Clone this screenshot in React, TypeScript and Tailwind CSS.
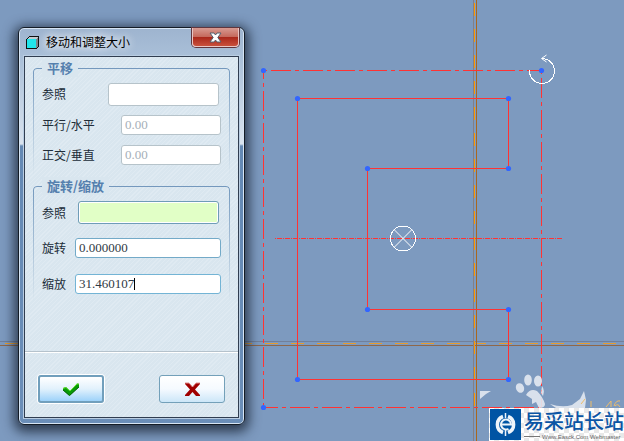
import { useId, type ReactNode } from "react";

const SHAPE: [number, number][] = [
  [297, 98], [508, 98], [508, 168], [367, 168],
  [367, 309], [508, 309], [508, 379], [297, 379],
];
const CORNERS: [number, number][] = [[263, 70], [541, 70], [263, 407]];

function Canvas() {
  return (
    <svg className="absolute inset-0 h-full w-full" shapeRendering="crispEdges" aria-hidden="true">
      <g fill="none" strokeWidth="1">
        <path d="M0 341.5H2000" stroke="#72809a" />
        <path d="M5 343.5H2000" stroke="#e69b2c" strokeDasharray="13 13" />
        <path d="M0 345.5H2000" stroke="#8f6749" />
        <path d="M473.5 0V441" stroke="#837f86" />
        <path d="M474.5 3V408" stroke="#ff9900" strokeDasharray="13 13" />
        <path d="M476.5 0V441" stroke="#a9671f" />
      </g>
      <g fill="none" stroke="#ff3333" strokeWidth="1">
        <path d="M263 70.500H541" strokeDasharray="20 4 4 4" strokeDashoffset="24" />
        <path d="M263.500 70V407" strokeDasharray="20 4 4 4" strokeDashoffset="11" />
        <path d="M541.500 70V407" strokeDasharray="20 4 4 4" strokeDashoffset="24" />
        <path d="M263 407.500H541" strokeDasharray="20 4 4 4" strokeDashoffset="5" />
        <path d="M297.500 98.500H508.500V168.500H367.500V309.500H508.500V379.500H297.500Z" />
        <path d="M275 238.500H562" strokeDasharray="5 1 1 1" strokeDashoffset="6" />
      </g>
      <g fill="none" stroke="#fff" strokeWidth="1">
        <circle cx="403" cy="238.500" r="12.500" />
        <path d="M394 229.500L412 247.500M412 229.500L394 247.500" shapeRendering="auto" />
        <path d="M529.500 70.500A12.500 12.500 0 1 0 542 58.500" />
        <path d="M546.500 55L541.500 58.500L546.500 62" shapeRendering="auto" />
      </g>
      <g fill="#3366ff" shapeRendering="auto">
        {[...SHAPE, ...CORNERS].map(([x, y]) => (
          <circle key={`${x}-${y}`} cx={x + 0.5} cy={y + 0.5} r="2.600" />
        ))}
      </g>
      <g fill="#e3e9f1" fillOpacity="0.900" shapeRendering="auto">
        <path d="M480 391H491L486 394L480 399Z" />
        <ellipse cx="520" cy="388" rx="4" ry="5" transform="rotate(-25 520 388)" />
        <ellipse cx="528" cy="380" rx="3.800" ry="5.500" />
        <ellipse cx="538" cy="381" rx="4" ry="5.500" />
        <path d="M542 386Q545 390 543 396L541 393Z" />
        <path d="M526 395Q530 388 537 391Q543 397 545 404Q545 408 539 408L536 402L532 404L532 399Z" />
        <path d="M550 404Q562 408 572 405L580 399L584 391L586 400L585 408H556Z" />
      </g>
      <path d="M581 404L585 399M591 401V407M606 407L611 401V407M614 406Q616 400 620 401M615 406Q618 403 620 407" fill="none" stroke="#efbd68" shapeRendering="auto" />
    </svg>
  );
}

function Watermark() {
  return (
    <div className="absolute right-0 bottom-0 flex h-[33px] w-[135px] items-center gap-[3px] bg-[conic-gradient(#e8e8e8_25%,#fff_0_50%,#e8e8e8_0_75%,#fff_0)] bg-size-[10px_10px] pl-px">
      <svg className="h-[31px] w-[31px] shrink-0" viewBox="0 0 31 31" aria-hidden="true">
        <path fill="#0054a4" d="M0 0H31V31H0Z" />
        <path d="M13 7.500A8.500 8.500 0 0 0 13 23.500M18 7.500A8.500 8.500 0 0 1 18 23.500" fill="none" stroke="#eef4fa" strokeWidth="3.500" />
        <path d="M12 15.500H21A5 5 0 1 0 18.500 19.800" fill="none" stroke="#eef4fa" strokeWidth="2" />
        <path d="M15.500 4V9M15.500 21V27" stroke="#eef4fa" strokeWidth="1.500" />
      </svg>
      <div className="flex flex-col whitespace-nowrap">
        <span className="text-[20px] leading-[24px] font-medium text-[#0b55a5]">易采站长站</span>
        <span className="flex items-center gap-0.5 font-['Liberation_Sans',sans-serif] text-[6px] leading-[8px] text-[#666]">
          <span className="h-px w-4 bg-[#777]" />
          Www.Easck.Com Webmaster
        </span>
      </div>
    </div>
  );
}

function Group({ title, children }: { title: string; children: ReactNode }) {
  return (
    <fieldset className="relative mx-2 min-w-0 pl-[9px]">
      <div className="pointer-events-none absolute inset-x-0 top-[9px] bottom-0 rounded-t-[4px] border border-b-0 border-[#7398bd] [mask-image:linear-gradient(#000,transparent)]" />
      <legend className="relative float-left h-[18px] w-fit bg-[#d9e6ef] px-[5px] text-[13px] leading-[18px] font-bold text-[#5580ae]">{title}</legend>
      <div className="clear-both">{children}</div>
    </fieldset>
  );
}

const inputBase = "block min-w-0 rounded-[3px] border px-[3px] font-['Liberation_Serif',serif] text-[13px] leading-[18px] outline-none";

type FieldProps = { label: string; box: string; row: string; value?: string; disabled?: boolean; active?: boolean };

function Field({ label, box, row, value, disabled, active }: FieldProps) {
  const id = useId();
  return (
    <div className={`flex items-center justify-between ${row}`}>
      <label htmlFor={id} className="text-[12px] text-[#202c38]">{label}</label>
      <div className="relative">
        <input id={id} className={`${inputBase} ${box}`} defaultValue={value} disabled={disabled} />
        {active && <span className="pointer-events-none absolute top-1 left-[59px] h-3 w-px bg-black" />}
      </div>
    </div>
  );
}

function Dialog() {
  return (
    <section
      role="dialog"
      aria-label="移动和调整大小"
      className="absolute top-[27px] left-[18px] flex w-[227px] flex-col rounded-[6px] border border-[#141c26] bg-[linear-gradient(#9eb4cf,#a9bfd8_28px,#d9e3ee_116px,#6489b4_118px,#6b8eb8)] px-[5px] pb-[6px] shadow-[0_3px_12px_4px_rgba(20,30,45,0.75),inset_0_0_0_1px_#d6e4f3]"
    >
      <header className="flex h-7 items-center">
        <svg className="ml-0.5 h-[13px] w-[13px]" viewBox="0 0 13 13" shapeRendering="crispEdges" aria-hidden="true">
          <path fill="#111" d="M3 0H13V10L10 13H0V3Z" />
          <path fill="#c2cbd0" d="M3 1H12L10 3H1Z" />
          <path fill="#7a858c" d="M10 3L12 1V10L10 12Z" />
          <path fill="#20e5ec" d="M1 3H10V12H1Z" />
        </svg>
        <h1 className="ml-[7px] flex-1 text-[12px] text-black [text-shadow:0_0_10px_#fff,0_0_8px_#fff]">移动和调整大小</h1>
        <button
          type="button"
          aria-label="关闭"
          className="flex h-[19px] w-[47px] items-center justify-center self-start rounded-b-[4px] border border-t-0 border-[#e8c6c5] bg-[linear-gradient(#d89a91,#c56a5d_48%,#aa281b_52%,#c9503c)] shadow-[0_0_0_1px_#61363d]"
        >
          <svg className="h-[11px] w-[13px]" viewBox="0 0 13 11" aria-hidden="true">
            <path d="M1 1H5L6.500 3L8 1H12L8.800 5.500L12 10H8L6.500 8L5 10H1L4.200 5.500Z" fill="#fff" stroke="#54606f" />
          </svg>
        </button>
      </header>
      <form
        className="flex flex-col border border-[#303d50] bg-[#d9e6ef] bg-[repeating-linear-gradient(135deg,transparent_0_2px,#dfeaf2_2px_3px)] shadow-[0_0_0_1px_#b9cde2]"
        onSubmit={(e) => e.preventDefault()}
      >
        <div className="flex flex-col gap-0.5 border-b border-[#b5c2cc] pt-0.5 pb-[50px]">
          <Group title="平移">
            <div className="flex flex-col pb-[5px]">
              <Field label="参照" row="h-[33px] pt-[1px] pr-[11px]" box="h-[23px] w-[111px] border-[#b6c3ca] bg-white" />
              <Field label="平行/水平" row="h-[30px] pr-[9px]" box="h-5 w-[100px] border-[#b6c3ca] bg-white text-[#a5afb8]" value="0.00" disabled />
              <Field label="正交/垂直" row="h-[30px] pr-[9px]" box="h-5 w-[100px] border-[#b6c3ca] bg-white text-[#a5afb8]" value="0.00" disabled />
            </div>
          </Group>
          <Group title="旋转/缩放">
            <div className="flex flex-col">
              <Field label="参照" row="h-[35px] pr-[11px]" box="h-[23px] w-[141px] border-[#6f9cb8] bg-[#e1ffc6] shadow-[inset_0_0_0_1px_#fff]" />
              <Field label="旋转" row="h-[36px] pr-[9px]" box="h-5 w-[146px] border-[#73aac8] bg-white text-[#303a44]" value="0.000000" />
              <Field label="缩放" row="h-[35px] pr-[9px]" box="h-5 w-[146px] border-[#73b4d5] bg-white text-[#303a44]" value="31.460107" active />
            </div>
          </Group>
        </div>
        <footer className="flex justify-between border-t border-white px-[13px] pt-[22px] pb-[14px]">
          <button type="submit" aria-label="确定" className="flex h-7 w-[66px] items-center justify-center rounded-[3px] border-2 border-[#719fbc] bg-[linear-gradient(#fff,#e1f1fc_50%,#9dd2fa)] shadow-[0_0_0_1px_#fff]">
            <svg className="h-[13px] w-[18px]" viewBox="0 0 18 13" aria-hidden="true">
              <path d="M1 5L4 4L8 8L15 0.500L17 1V4L8 12.500H7L1 7Z" fill="#079b07" />
              <path d="M1 5.500L4 4.500L8 8L15 1H17" fill="none" stroke="#62df2e" />
              <path d="M1 7L7.500 12.500L17 4" fill="none" stroke="#066506" />
            </svg>
          </button>
          <button type="button" aria-label="取消" className="flex h-7 w-[66px] items-center justify-center rounded-[3px] border border-[#73a0b9] bg-[linear-gradient(#fff,#f5faff_50%,#cce6f8)]">
            <svg className="h-[15px] w-[17px]" viewBox="0 0 17 15" aria-hidden="true">
              <path d="M1 1H5L8.500 5L12 1H16V2L11 7.500L16 13V14H12L8.500 10L5 14H1V13L6 7.500L1 2Z" fill="#a00000" />
              <path d="M1 1H5L8.500 5L12 1H16" fill="none" stroke="#e39191" />
            </svg>
          </button>
        </footer>
      </form>
    </section>
  );
}

export default function App() {
  return (
    <main className="relative h-screen min-h-[441px] overflow-hidden bg-[#7d9abf] font-['Noto_Sans_CJK_SC',sans-serif]">
      <Canvas />
      <Dialog />
      <Watermark />
    </main>
  );
}
